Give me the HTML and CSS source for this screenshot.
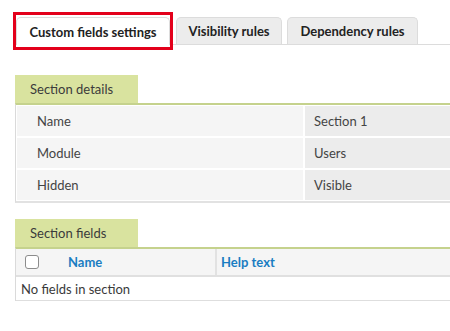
FILE: index.html
```html
<!DOCTYPE html>
<html>
<head>
<meta charset="utf-8">
<link rel="stylesheet" href="styles.css">
</head>
<body>
<div class="page">
  <div class="tabs">
    <div class="tab active">Custom fields settings</div>
    <div class="tab">Visibility rules</div>
    <div class="tab">Dependency rules</div>
  </div>

  <section class="panel details-panel">
    <div class="panel-title">Section details</div>
    <div class="panel-body">
      <table class="details">
        <tr><td class="label">Name</td><td class="value">Section 1</td></tr>
        <tr><td class="label">Module</td><td class="value">Users</td></tr>
        <tr><td class="label">Hidden</td><td class="value">Visible</td></tr>
      </table>
    </div>
  </section>

  <section class="panel fields-panel">
    <div class="panel-title">Section fields</div>
    <div class="panel-body">
      <div class="fields-head">
        <div class="col-check"><span class="checkbox"></span></div>
        <div class="col-name">Name</div>
        <div class="col-help">Help text</div>
      </div>
      <div class="fields-empty">No fields in section</div>
    </div>
  </section>
</div>
</body>
</html>
```
FILE: styles.css
```css
html, body {
  margin: 0;
  padding: 0;
  background: #fff;
}
body {
  font-family: Lato, "Open Sans", Arial, sans-serif;
  font-size: 13px;
  color: #3a3a3a;
  overflow: hidden;
}
.page {
  width: 450px;
  padding-left: 15px;
  box-sizing: border-box;
}

/* Tabs */
.tabs {
  display: flex;
  gap: 5px;
  margin-top: 17px;
  padding-left: 1px;
  border-bottom: 1px solid #dcdcdc;
  height: 27px;
}
.tab {
  position: relative;
  height: 27px;
  box-sizing: border-box;
  padding: 0 15px;
  display: flex;
  align-items: center;
  justify-content: center;
  background: #ececec;
  border: 1px solid #dcdcdc;
  border-bottom: none;
  border-radius: 5px 5px 0 0;
  font-weight: 700;
  font-size: 13px;
  color: #222;
  white-space: nowrap;
}
.tab:nth-child(1) { width: 154px; }
.tab:nth-child(2) { width: 106px; margin-left: 1px; }
.tab:nth-child(3) { width: 131px; }
.tab.active {
  background: #fff;
  height: 28px;
}
.tab.active::after {
  content: "";
  position: absolute;
  left: -4px;
  right: -4px;
  top: -6px;
  bottom: -5px;
  border: 3px solid #e3001b;
}

/* Panels */
.panel-title {
  width: 123px;
  height: 28px;
  box-sizing: border-box;
  padding-left: 15px;
  display: flex;
  align-items: center;
  background: #d9e39f;
  color: #3b3b3b;
  font-size: 13px;
}
.panel-body {
  border-top: 2px solid #c5d28d;
  border-left: 1px solid #dadada;
}
.details-panel {
  margin-top: 30px;
}
.details-panel .panel-body {
  border-bottom: 2px solid #e2e2e2;
}
.details {
  width: calc(100% + 20px);
  border-collapse: separate;
  border-spacing: 2px;
  margin: -1px 0 -1px -1px;
}
.details td {
  height: 30px;
  padding: 0;
  box-sizing: border-box;
  color: #444;
}
.details .label {
  width: 286px;
  background: #f5f5f5;
  padding-left: 20px;
}
.details .value {
  background: #ececec;
  padding-left: 9px;
}

.fields-panel {
  margin-top: 16px;
}
.fields-head {
  display: flex;
  height: 26px;
  background: #f5f5f5;
  border-bottom: 2px solid #e0e0e0;
  box-sizing: content-box;
}
.col-check {
  width: 51px;
  display: flex;
  align-items: center;
  padding-left: 9px;
  box-sizing: border-box;
}
.checkbox {
  width: 12px;
  height: 12px;
  border: 1px solid #8c8c8c;
  border-radius: 3px;
  background: #fff;
}
.col-name, .col-help {
  display: flex;
  align-items: center;
  font-weight: 700;
  color: #1a7dc2;
}
.col-name {
  width: 147px;
  padding-left: 1px;
  border-right: 2px solid #e2e2e2;
}
.col-help {
  padding-left: 4px;
}
.fields-empty {
  height: 23px;
  display: flex;
  align-items: center;
  padding-left: 5px;
  border-bottom: 1px solid #dedede;
  color: #3a3a3a;
}
```
